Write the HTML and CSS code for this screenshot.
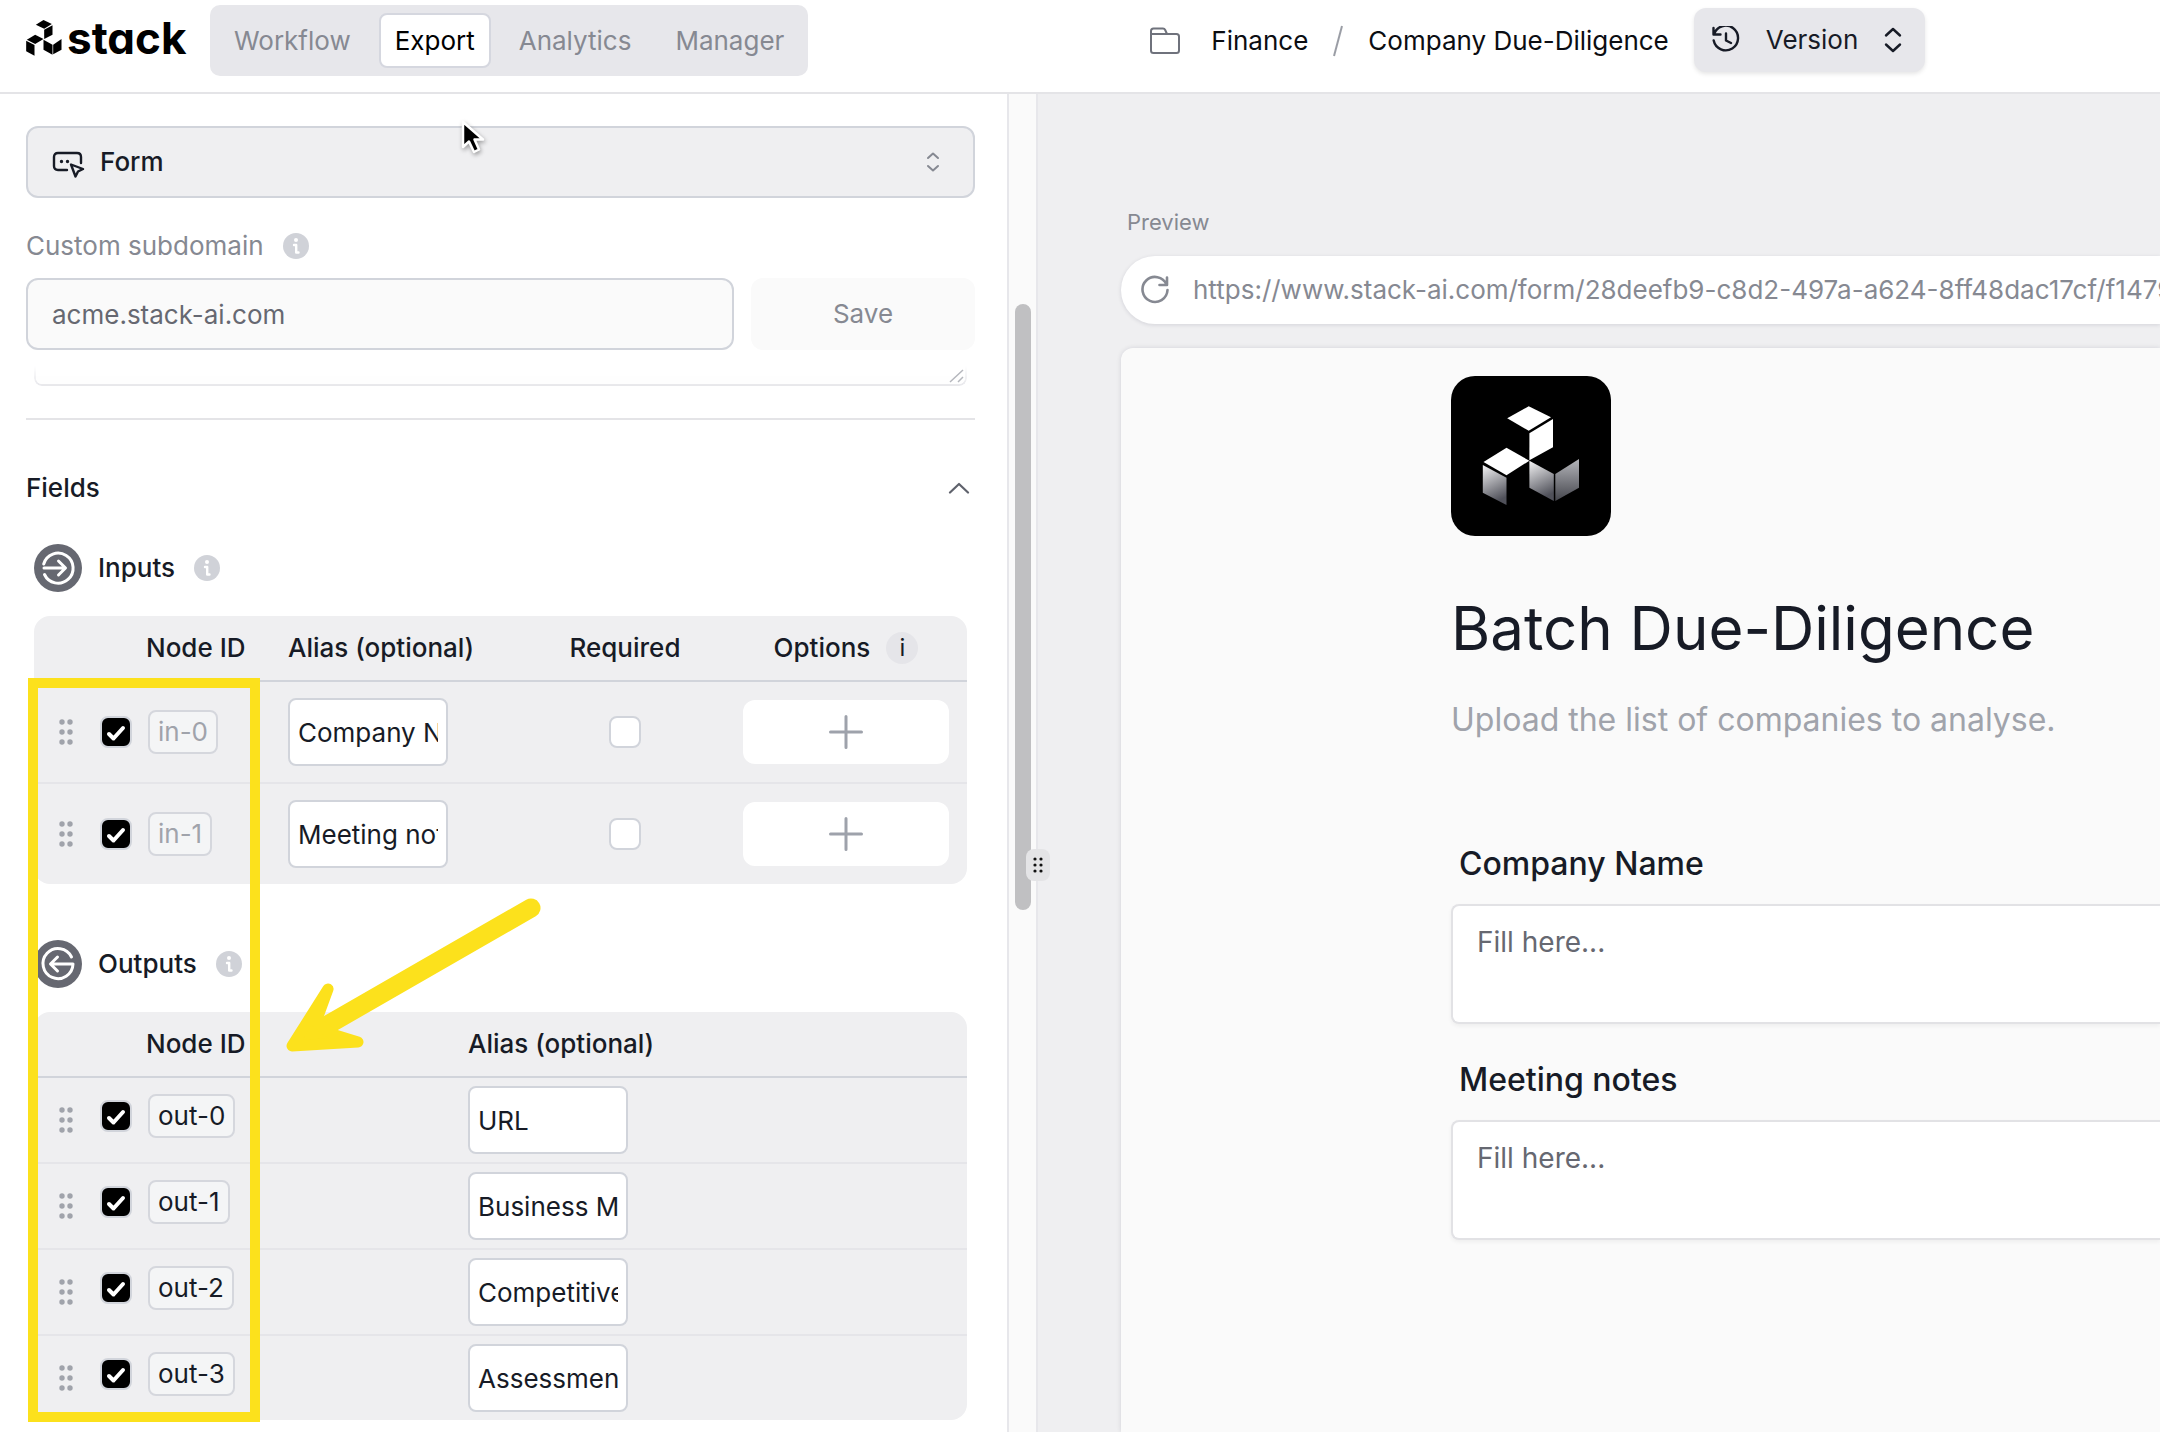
FILE: index.html
```html
<!DOCTYPE html>
<html lang="en">
<head>
    <meta charset="UTF-8">
    <meta name="viewport" content="width=device-width, initial-scale=1.0">
    <title>Stack - Company Due-Diligence</title>
    <link rel="stylesheet" href="styles.css">
</head>
<body>

<header class="topbar">
    <a class="brand" href="#">
        <svg class="brand-mark" viewBox="18 36 107 108" fill="currentColor">
            <path d="M70 36 95 48 72 62 47 50Z"/>
            <path d="M97 52V80L72 93V65Z"/>
            <path d="M45 80 70 93 45 108 20 95Z"/>
            <path d="M18 98 43 111V143L18 130Z"/>
            <path d="M70 95 97 110V140L70 125Z"/>
            <path d="M124 93V125L99 139V110Z"/>
        </svg>
        <span>stack</span>
    </a>
    <nav class="tabs">
        <button class="tab">Workflow</button>
        <button class="tab active">Export</button>
        <button class="tab">Analytics</button>
        <button class="tab">Manager</button>
    </nav>
    <div class="crumbs">
        <svg class="folder" viewBox="0 0 30 28" fill="none" stroke="#6f727c" stroke-width="2" stroke-linejoin="round">
            <path d="M1 7V4Q1 1.500 3.500 1.500H13Q14.500 1.500 15.200 3L17 7H26.500Q29 7 29 9.500V23.500Q29 26 26.500 26H3.500Q1 26 1 23.500ZM1 7H17"/>
        </svg>
        <a href="#">Finance</a>
        <svg class="slash" viewBox="0 0 10 32" stroke="#9a9da5" stroke-width="2"><path d="M9 1 1 31"/></svg>
        <a href="#">Company Due-Diligence</a>
    </div>
    <button class="version">
        <svg width="28" height="28" viewBox="0 0 28 28" fill="none" stroke="currentColor" stroke-width="2.400" stroke-linecap="round" stroke-linejoin="round">
            <path d="M1.500 2V8.500H8.500M2 8.300A12.300 12.300 0 1 1 1.700 14.500M14 7.500V14.500L19 17"/>
        </svg>
        <span>Version</span>
        <svg width="18" height="26" viewBox="0 0 18 26" fill="none" stroke="currentColor" stroke-width="2.400" stroke-linecap="round" stroke-linejoin="round">
            <path d="M2 8.500 9 2 16 8.500M2 17.500 9 24 16 17.500"/>
        </svg>
    </button>
</header>

<main class="workspace">
    <section class="panel">
        <div class="panel-body">
            <div class="select-box">
                <svg class="select-icon" viewBox="0 0 34 28" fill="none" stroke="#171b26" stroke-width="2.400" stroke-linecap="round" stroke-linejoin="round">
                    <path d="M15 19H6Q2 19 2 15V6Q2 2 6 2H25Q29 2 29 6V12"/>
                    <path d="M19 13.500 31 18 26 20.500 23.500 25.500Z"/>
                    <path d="M9.500 10.500V10.600M15.500 10.500V10.600" stroke-width="3.400"/>
                </svg>
                <select aria-label="Export type">
                    <option>Form</option>
                </select>
                <svg class="select-arrows" viewBox="0 0 14 20" fill="none" stroke="#868992" stroke-width="2" stroke-linecap="round" stroke-linejoin="round">
                    <path d="M2 6 7 1.500 12 6M2 14 7 18.500 12 14"/>
                </svg>
            </div>

            <div class="label-row">
                <label for="subdomain">Custom subdomain</label>
                <svg class="info" viewBox="0 0 26 26"><use href="#info"/></svg>
            </div>
            <div class="subdomain-row">
                <input type="text" id="subdomain" value="acme.stack-ai.com">
                <button class="save">Save</button>
            </div>

            <div class="description">
                <textarea aria-label="Description" rows="1"></textarea>
                <svg class="resizer" viewBox="0 0 16 14" stroke="#b5b7bd" stroke-width="1.500"><path d="M1 13 14 1M9 13 14 8"/></svg>
            </div>

            <div class="section-head">
                <h2>Fields</h2>
                <svg width="22" height="12" viewBox="0 0 22 12" fill="none" stroke="#5f626c" stroke-width="2.200" stroke-linecap="round" stroke-linejoin="round"><path d="M2 10.500 11 2 20 10.500"/></svg>
            </div>

            <!-- Inputs -->
            <div class="group-head">
                <svg class="group-icon" viewBox="0 0 48 48" fill="none" stroke="#fff" stroke-width="3" stroke-linecap="round" stroke-linejoin="round">
                    <circle cx="24" cy="24" r="24" fill="#666871" stroke="none"/>
                    <path d="M9.700 20A15 15 0 1 1 10.500 30.500M10 24H31M24.500 17 31.500 24 24.500 31"/>
                </svg>
                <h3>Inputs</h3>
                <svg class="info" viewBox="0 0 26 26"><use href="#info"/></svg>
            </div>
            <table class="fields inputs">
                <thead>
                    <tr>
                        <th class="col-drag"></th>
                        <th class="col-check"></th>
                        <th class="col-node">Node ID</th>
                        <th class="col-alias">Alias (optional)</th>
                        <th class="col-required">Required</th>
                        <th class="col-options"><span class="options-head">Options <span class="info-dot">i</span></span></th>
                    </tr>
                </thead>
                <tbody>
                    <tr>
                        <td class="col-drag"><svg class="dots" viewBox="0 0 14 26"><use href="#dots"/></svg></td>
                        <td><input type="checkbox" aria-label="Show in-0" checked></td>
                        <td class="col-node"><span class="badge muted">in-0</span></td>
                        <td><input type="text" class="alias" aria-label="Alias of in-0" value="Company Name"></td>
                        <td class="col-required"><input type="checkbox" aria-label="in-0 required"></td>
                        <td class="col-options"><button class="add" aria-label="Add options"><svg viewBox="0 0 34 34"><use href="#plus"/></svg></button></td>
                    </tr>
                    <tr>
                        <td class="col-drag"><svg class="dots" viewBox="0 0 14 26"><use href="#dots"/></svg></td>
                        <td><input type="checkbox" aria-label="Show in-1" checked></td>
                        <td class="col-node"><span class="badge muted">in-1</span></td>
                        <td><input type="text" class="alias" aria-label="Alias of in-1" value="Meeting notes"></td>
                        <td class="col-required"><input type="checkbox" aria-label="in-1 required"></td>
                        <td class="col-options"><button class="add" aria-label="Add options"><svg viewBox="0 0 34 34"><use href="#plus"/></svg></button></td>
                    </tr>
                </tbody>
            </table>

            <!-- Outputs -->
            <div class="group-head">
                <svg class="group-icon" viewBox="0 0 48 48" fill="none" stroke="#fff" stroke-width="3" stroke-linecap="round" stroke-linejoin="round">
                    <circle cx="24" cy="24" r="24" fill="#666871" stroke="none"/>
                    <path d="M37.500 17A15 15 0 1 0 39 24H17M23.500 17 16.500 24 23.500 31"/>
                </svg>
                <h3>Outputs</h3>
                <svg class="info" viewBox="0 0 26 26"><use href="#info"/></svg>
            </div>
            <table class="fields outputs">
                <thead>
                    <tr>
                        <th class="col-drag"></th>
                        <th class="col-check"></th>
                        <th class="col-node">Node ID</th>
                        <th>Alias (optional)</th>
                    </tr>
                </thead>
                <tbody>
                    <tr>
                        <td class="col-drag"><svg class="dots" viewBox="0 0 14 26"><use href="#dots"/></svg></td>
                        <td class="col-check"><input type="checkbox" aria-label="Show out-0" checked></td>
                        <td class="col-node"><span class="badge">out-0</span></td>
                        <td><input type="text" class="alias" aria-label="Alias of out-0" value="URL"></td>
                    </tr>
                    <tr>
                        <td class="col-drag"><svg class="dots" viewBox="0 0 14 26"><use href="#dots"/></svg></td>
                        <td class="col-check"><input type="checkbox" aria-label="Show out-1" checked></td>
                        <td class="col-node"><span class="badge">out-1</span></td>
                        <td><input type="text" class="alias" aria-label="Alias of out-1" value="Business Model"></td>
                    </tr>
                    <tr>
                        <td class="col-drag"><svg class="dots" viewBox="0 0 14 26"><use href="#dots"/></svg></td>
                        <td class="col-check"><input type="checkbox" aria-label="Show out-2" checked></td>
                        <td class="col-node"><span class="badge">out-2</span></td>
                        <td><input type="text" class="alias" aria-label="Alias of out-2" value="Competitive"></td>
                    </tr>
                    <tr>
                        <td class="col-drag"><svg class="dots" viewBox="0 0 14 26"><use href="#dots"/></svg></td>
                        <td class="col-check"><input type="checkbox" aria-label="Show out-3" checked></td>
                        <td class="col-node"><span class="badge">out-3</span></td>
                        <td><input type="text" class="alias" aria-label="Alias of out-3" value="Assessment"></td>
                    </tr>
                </tbody>
            </table>
        </div>
        <div class="scroll-track"><div class="scroll-thumb"></div></div>
        <div class="grip">
            <svg viewBox="0 0 10 16"><g fill="#111"><circle cx="2" cy="2" r="1.600"/><circle cx="8" cy="2" r="1.600"/><circle cx="2" cy="8" r="1.600"/><circle cx="8" cy="8" r="1.600"/><circle cx="2" cy="14" r="1.600"/><circle cx="8" cy="14" r="1.600"/></g></svg>
        </div>
    </section>

    <section class="preview">
        <p class="preview-title">Preview</p>
        <div class="url-bar">
            <svg width="30" height="30" viewBox="0 0 30 30" fill="none" stroke="#868992" stroke-width="2.600" stroke-linecap="round" stroke-linejoin="round">
                <path d="M27 2.500V10H19.500M26.500 9.500A12.500 12.500 0 1 0 27.500 15"/>
            </svg>
            <input type="text" aria-label="Form address" value="https://www.stack-ai.com/form/28deefb9-c8d2-497a-a624-8ff48dac17cf/f1479" readonly>
        </div>
        <div class="form-card">
            <svg class="app-icon" viewBox="0 0 160 160" fill="#fff">
                <defs>
                    <linearGradient id="fadeLeft" x1="0" y1="0" x2="0.300" y2="1">
                        <stop offset="0" stop-color="#f5f5f6"/>
                        <stop offset="1" stop-color="#50515a"/>
                    </linearGradient>
                    <linearGradient id="fadeRight" x1="0" y1="0" x2="0" y2="1">
                        <stop offset="0" stop-color="#b4b5ba"/>
                        <stop offset="1" stop-color="#45464d"/>
                    </linearGradient>
                </defs>
                <rect width="160" height="160" rx="24" fill="#000"/>
                <path d="M77.700 30.300 100 41.300 77.700 54.700 56.200 42.300Z"/>
                <path d="M102 43V71.300L78.400 84.300V57.300Z"/>
                <path d="M55.500 71.700 78.400 84.700 55.500 99.300 32.500 86Z"/>
                <path d="M31.800 89 55.500 101.700V129L31.800 116.700Z" fill="url(#fadeLeft)"/>
                <path d="M78.400 84.700 102.800 98V125L78.400 111.700Z" fill="url(#fadeLeft)"/>
                <path d="M128 83V111.700L104.300 125V98Z" fill="url(#fadeRight)"/>
            </svg>
            <h1>Batch Due-Diligence</h1>
            <p class="subtitle">Upload the list of companies to analyse.</p>
            <label for="company">Company Name</label>
            <textarea id="company" placeholder="Fill here..."></textarea>
            <label for="notes">Meeting notes</label>
            <textarea id="notes" placeholder="Fill here..."></textarea>
        </div>
    </section>
</main>

<!-- highlight drawn over the node column -->
<div class="highlight"></div>
<svg class="arrow" viewBox="0 0 270 170" fill="#fce11c" stroke="#fce11c" stroke-linecap="round" stroke-linejoin="round">
    <path d="M251 18 44 137" stroke-width="19"/>
    <path d="M12 156 48 99 36 132 52 144 78 152Z" stroke-width="11"/>
</svg>
<svg class="cursor" viewBox="0 0 26 36"><path d="M2 2V27L8 21.500 13 32 18 29.500 13.500 19.500H22Z" fill="#000" stroke="#fff" stroke-width="2.500" stroke-linejoin="round"/></svg>

<!-- shared symbols -->
<svg class="sprite" width="0" height="0">
    <symbol id="info" viewBox="0 0 26 26">
        <circle cx="13" cy="13" r="13" fill="#d0d2d8"/>
        <circle cx="13" cy="7" r="2" fill="#fff"/>
        <path d="M11 12H13.200V19.500H15.500" fill="none" stroke="#fff" stroke-width="2.400" stroke-linecap="round" stroke-linejoin="round"/>
    </symbol>
    <symbol id="dots" viewBox="0 0 14 26">
        <g fill="#a0a3ab"><circle cx="3" cy="3" r="2.700"/><circle cx="11" cy="3" r="2.700"/><circle cx="3" cy="13" r="2.700"/><circle cx="11" cy="13" r="2.700"/><circle cx="3" cy="23" r="2.700"/><circle cx="11" cy="23" r="2.700"/></g>
    </symbol>
    <symbol id="plus" viewBox="0 0 34 34">
        <path d="M17 1.500V32.500M1.500 17H32.500" stroke="#9ea2ab" stroke-width="3" stroke-linecap="round"/>
    </symbol>
</svg>

</body>
</html>
```
FILE: styles.css
```css
* {
    box-sizing: border-box;
}
body {
    margin: 0;
    height: 100vh;
    display: flex;
    flex-direction: column;
    overflow: hidden;
    position: relative;
    font-family: Inter, "Liberation Sans", sans-serif;
    font-size: 26px;
    line-height: 32px;
    color: #171b26;
    background-color: #fff;
}
h1, h2, h3, p {
    margin: 0;
}
a {
    color: #0b0d12;
    text-decoration: none;
}
svg {
    display: block;
    flex: none;
}
button, input, select, textarea {
    font: inherit;
    color: inherit;
    margin: 0;
}
button {
    border: none;
    cursor: pointer;
}

/* top bar */
.topbar {
    height: 94px;
    flex: none;
    display: flex;
    align-items: flex-start;
    padding: 5px 26px 0;
    border-bottom: 2px solid #e4e4e7;
}
.brand {
    width: 184px;
    height: 66px;
    display: flex;
    align-items: center;
    gap: 5px;
    color: #000;
    font-size: 44px;
    font-weight: 700;
    font-feature-settings: "cv11";
}
.brand-mark {
    width: 36px;
    height: 36px;
}
.tabs {
    display: flex;
    gap: 12px;
    padding: 8px;
    border-radius: 10px;
    background-color: #e7e7eb;
}
.tab {
    height: 55px;
    padding: 0 14px;
    border: 2px solid transparent;
    border-radius: 8px;
    background: none;
    color: #868992;
}
.tab.active {
    background-color: #fff;
    border-color: #d5d7df;
    color: #000;
}
.crumbs {
    height: 72px;
    margin-left: 342px;
    display: flex;
    align-items: center;
}
.folder {
    width: 30px;
    height: 28px;
    margin-right: 31px;
}
.slash {
    width: 10px;
    height: 32px;
    margin: 0 25px;
}
.version {
    height: 64px;
    margin: 3px 0 0 25px;
    padding: 0 23px 0 18px;
    display: flex;
    align-items: center;
    gap: 26px;
    border-radius: 12px;
    background-color: #e7e7eb;
    box-shadow: 0 2px 4px rgba(0, 0, 0, 0.1);
}

/* two panes */
.workspace {
    flex: 1;
    min-height: 0;
    display: grid;
    grid-template-columns: 173fr 187fr;
}
.panel {
    display: flex;
    position: relative;
    min-width: 0;
    min-height: 0;
    border-right: 2px solid #e7e7eb;
}
.panel-body {
    flex: 1;
    min-width: 0;
    padding: 32px 32px 0 26px;
    overflow: hidden;
}
.scroll-track {
    width: 29px;
    padding: 210px 5px 0 6px;
    border-left: 2px solid #e7e7eb;
    background-color: #fafafa;
}
.scroll-thumb {
    height: 606px;
    border-radius: 8px;
    background-color: #c0c0c2;
}
.grip {
    position: absolute;
    top: 755px;
    right: -14px;
    width: 24px;
    height: 32px;
    padding: 8px 7px;
    border-radius: 8px;
    background-color: #e4e4e6;
}

/* export settings */
.select-box {
    position: relative;
}
.select-box select {
    width: 100%;
    height: 72px;
    padding: 0 72px;
    appearance: none;
    border: 2px solid #d1d4db;
    border-radius: 12px;
    background-color: #efeff1;
    font-weight: 500;
}
.select-icon {
    position: absolute;
    left: 26px;
    top: 25px;
    width: 34px;
    height: 28px;
}
.select-arrows {
    position: absolute;
    right: 35px;
    top: 26px;
    width: 14px;
    height: 20px;
}
.label-row {
    display: flex;
    align-items: center;
    gap: 19px;
    margin: 32px 0 16px;
    color: #868992;
}
.info {
    width: 26px;
    height: 26px;
}
.subdomain-row {
    display: flex;
    gap: 17px;
}
.subdomain-row input {
    flex: 1;
    min-width: 0;
    height: 72px;
    padding: 0 24px;
    border: 2px solid #d1d4db;
    border-radius: 12px;
    background-color: #fafafa;
    color: #666871;
}
.save {
    width: 224px;
    border-radius: 12px;
    background-color: #fafafa;
    color: #868992;
}
.description {
    position: relative;
    padding: 16px 8px 32px;
    border-bottom: 2px solid #e4e4e7;
}
.description textarea {
    display: block;
    width: 100%;
    height: 20px;
    padding: 0;
    border: 2px solid #e7e7eb;
    border-top: none;
    border-radius: 0 0 8px 8px;
    resize: none;
    background-color: #fefefe;
    mask-image: linear-gradient(transparent, #000);
}
.resizer {
    position: absolute;
    right: 10px;
    top: 19px;
    width: 16px;
    height: 14px;
}
.section-head {
    display: flex;
    align-items: center;
    justify-content: space-between;
    padding: 52px 5px 40px 0;
}
h2, h3 {
    font-size: 26px;
    font-weight: 500;
}
.group-head {
    display: flex;
    align-items: center;
    gap: 16px;
    margin: 0 8px 24px;
}
.group-head .info {
    margin-left: 3px;
}
.group-icon {
    width: 48px;
    height: 48px;
}

/* field tables */
.fields {
    width: calc(100% - 16px);
    margin: 0 8px 56px;
    table-layout: fixed;
    border-spacing: 0;
    border-radius: 16px;
    background-color: #efeff1;
}
.fields th {
    height: 66px;
    padding: 0;
    border-bottom: 2px solid #d1d4db;
    font-weight: 500;
    text-align: left;
}
.fields td {
    padding: 0;
    border-bottom: 2px solid #e5e5e9;
}
.inputs td {
    height: 102px;
}
.outputs td {
    height: 86px;
}
.fields tr:last-child td {
    border-bottom: none;
}
.inputs tr:last-child td {
    height: 100px;
}
.outputs tr:last-child td {
    height: 84px;
}
.fields .col-drag {
    width: 66px;
    padding-left: 25px;
}
.fields .col-check {
    width: 46px;
}
.fields td.col-node {
    padding-left: 2px;
}
.inputs .col-node {
    width: 142px;
}
.outputs .col-node {
    width: 322px;
}
.outputs td.col-check, .outputs td.col-node {
    padding-bottom: 8px;
}
.inputs .col-alias {
    width: 237px;
}
.fields .col-required {
    width: 200px;
    text-align: center;
}
.fields .col-options {
    padding: 0 18px;
    text-align: center;
}
.dots {
    width: 14px;
    height: 26px;
}
.options-head {
    display: flex;
    align-items: center;
    justify-content: center;
    gap: 16px;
}
.info-dot {
    width: 32px;
    height: 32px;
    border-radius: 50%;
    background-color: #e5e5e9;
    font-size: 24px;
    font-weight: 400;
}
input[type="checkbox"] {
    display: block;
    width: 32px;
    height: 32px;
    appearance: none;
    border: 2px solid #d1d4db;
    border-radius: 8px;
    background-color: #fff;
}
.col-required input[type="checkbox"] {
    margin: 0 auto;
}
input[type="checkbox"]:checked {
    background: #000 url("data:image/svg+xml,%3Csvg xmlns='http://www.w3.org/2000/svg' viewBox='0 0 28 28' fill='none' stroke='white' stroke-width='4' stroke-linecap='round' stroke-linejoin='round'%3E%3Cpath d='M7 16 11.5 20.500 21 10'/%3E%3C/svg%3E") center / 28px 28px no-repeat;
}
.badge {
    display: inline-block;
    vertical-align: middle;
    padding: 4px 8px;
    border: 2px solid #d5d7dd;
    border-radius: 8px;
    background-color: #f4f5f6;
}
.badge.muted {
    color: #a0a3ab;
}
.alias {
    display: block;
    width: 160px;
    height: 68px;
    padding: 0 8px;
    border: 2px solid #d1d4db;
    border-radius: 8px;
    background-color: #fff;
}
.add {
    display: flex;
    align-items: center;
    justify-content: center;
    width: 100%;
    height: 64px;
    border-radius: 12px;
    background-color: #fff;
}
.add svg {
    width: 34px;
    height: 34px;
}

/* preview pane */
.preview {
    display: flex;
    flex-direction: column;
    min-width: 0;
    min-height: 0;
    padding: 112px 0 0 83px;
    overflow: hidden;
    background-color: #efeff1;
}
.preview-title {
    padding-left: 6px;
    font-size: 22px;
    color: #868992;
}
.url-bar {
    flex: none;
    height: 68px;
    margin: 18px 0 24px;
    padding-left: 19px;
    display: flex;
    align-items: center;
    gap: 23px;
    border-radius: 34px 0 0 34px;
    background-color: #fff;
    box-shadow: 0 1px 4px rgba(20, 20, 50, 0.12);
}
.url-bar input {
    flex: 1;
    min-width: 0;
    padding: 0;
    border: none;
    background: none;
    color: #868992;
}
.form-card {
    flex: 1;
    padding: 28px 0 0 330px;
    border-radius: 12px 0 0 0;
    background-color: #fafafa;
    box-shadow: 0 0 5px rgba(20, 20, 50, 0.12);
}
.app-icon {
    width: 160px;
    height: 160px;
}
.form-card h1 {
    margin: 56px 0 36px;
    font-size: 60px;
    line-height: 72px;
    font-weight: 400;
}
.subtitle {
    margin-bottom: 104px;
    font-size: 32px;
    line-height: 40px;
    color: #a0a3ab;
}
.form-card label {
    display: block;
    padding: 0 8px;
    margin-bottom: 20px;
    font-size: 32px;
    line-height: 40px;
    font-weight: 500;
}
.form-card textarea {
    display: block;
    width: 100%;
    height: 120px;
    margin-bottom: 36px;
    padding: 18px 24px;
    border: 2px solid #e2e2e5;
    border-right: none;
    border-radius: 8px 0 0 8px;
    resize: none;
    background-color: #fff;
    box-shadow: 0 2px 4px rgba(0, 0, 0, 0.05);
    font-size: 28px;
    line-height: 36px;
}
.form-card textarea::placeholder {
    color: #666871;
}

/* overlays */
.highlight {
    position: absolute;
    left: 28px;
    top: 678px;
    width: 232px;
    height: 744px;
    border: 10px solid #fce11c;
    pointer-events: none;
}
.arrow {
    position: absolute;
    left: 280px;
    top: 890px;
    width: 270px;
    height: 170px;
    pointer-events: none;
}
.cursor {
    position: absolute;
    left: 461px;
    top: 120px;
    width: 26px;
    height: 36px;
    filter: drop-shadow(1px 2px 2px rgba(0, 0, 0, 0.35));
    pointer-events: none;
}
.sprite {
    position: absolute;
}
```
